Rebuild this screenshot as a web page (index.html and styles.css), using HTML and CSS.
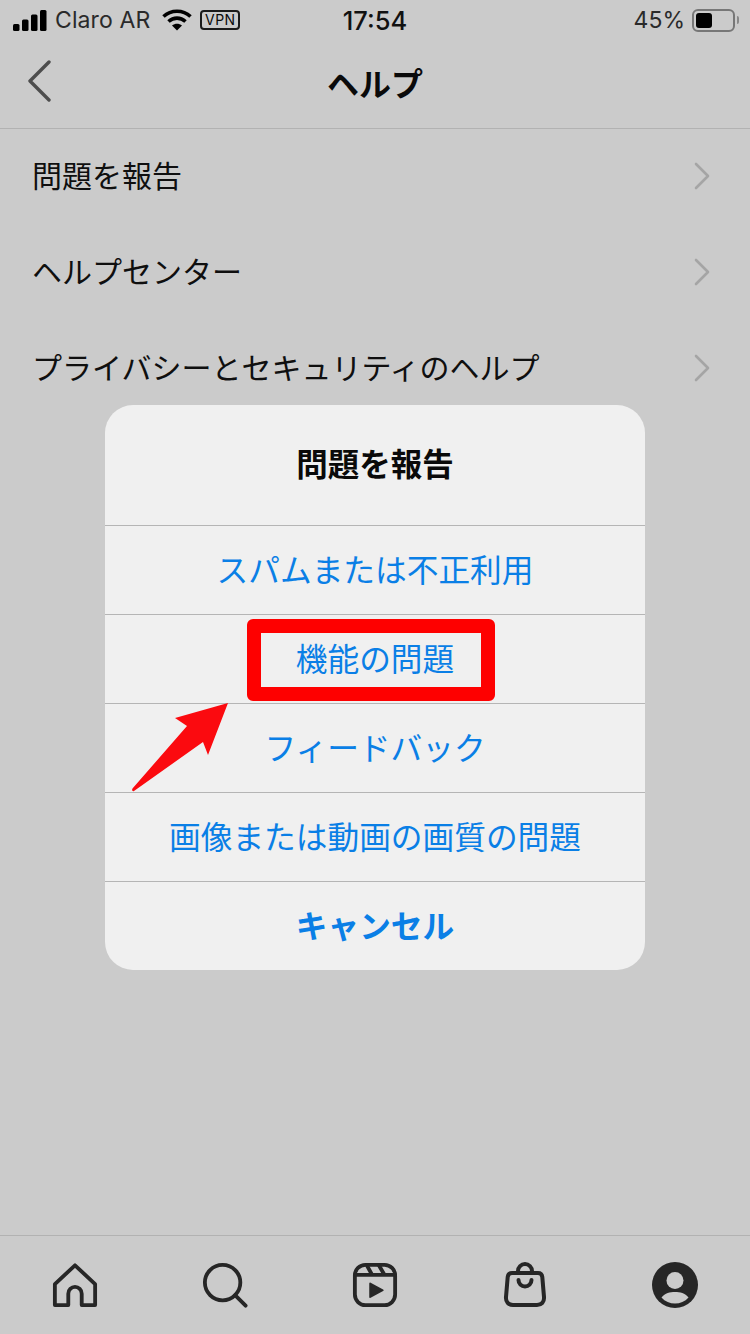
FILE: index.html
```html
<!DOCTYPE html>
<html lang="ja">
<head>
    <meta charset="UTF-8">
    <meta name="viewport" content="width=device-width, initial-scale=1.0">
    <title>ヘルプ</title>
    <link rel="stylesheet" href="styles.css">
</head>
<body>
    <div class="screen">

        <!-- Status bar -->
        <div class="status-bar">
            <div class="status-left">
                <svg class="signal" width="34" height="21" viewBox="0 0 34 21">
                    <rect x="0" y="14" width="6.500" height="7" rx="1.500"/>
                    <rect x="9" y="9.500" width="6.500" height="11.500" rx="1.500"/>
                    <rect x="18" y="4.500" width="6.500" height="16.500" rx="1.500"/>
                    <rect x="27" y="0" width="6.500" height="21" rx="1.500"/>
                </svg>
                <span class="carrier">Claro AR</span>
                <svg class="wifi" width="30" height="22" viewBox="0 0 30 22">
                    <path d="M1.500 7.500C9 .5 21 .5 28.500 7.500" fill="none" stroke="#000" stroke-width="3.600"/>
                    <path d="M6.500 12.500C11.500 8 18.500 8 23.500 12.500" fill="none" stroke="#000" stroke-width="3.600"/>
                    <path d="M10 16.500C13 14 17 14 20 16.500L15 21.500Z"/>
                </svg>
                <span class="vpn">VPN</span>
            </div>
            <div class="status-time">17:54</div>
            <div class="status-right">
                <span class="percent">45%</span>
                <span class="battery"><span class="battery-level"></span></span>
                <span class="battery-cap"></span>
            </div>
        </div>

        <!-- Nav -->
        <header class="nav">
            <svg class="back" width="24" height="42" viewBox="0 0 24 42">
                <path d="M22 2L3 21L22 40" fill="none" stroke="#4d4d4d" stroke-width="3.400" stroke-linecap="round" stroke-linejoin="round"/>
            </svg>
            <h1>ヘルプ</h1>
        </header>

        <!-- Help list -->
        <ul class="help-list">
            <li><span>問題を報告</span><svg class="chevron" width="16" height="28" viewBox="0 0 16 28"><path d="M2 2L14 14L2 26"/></svg></li>
            <li><span>ヘルプセンター</span><svg class="chevron" width="16" height="28" viewBox="0 0 16 28"><path d="M2 2L14 14L2 26"/></svg></li>
            <li><span>プライバシーとセキュリティのヘルプ</span><svg class="chevron" width="16" height="28" viewBox="0 0 16 28"><path d="M2 2L14 14L2 26"/></svg></li>
        </ul>

        <!-- Tab bar -->
        <nav class="tab-bar">
            <svg width="46" height="46" viewBox="-1 -1 48 48" class="tab-icon">
                <path d="M23 2.500L44 22V44H30V32A7 7 0 0 0 16 32V44H2V22Z"/>
            </svg>
            <svg width="46" height="46" viewBox="-1 -1 48 48" class="tab-icon">
                <circle cx="20.500" cy="20.500" r="18.500"/>
                <path d="M33.500 33.500L44.500 44.500" stroke-linecap="round"/>
            </svg>
            <svg width="46" height="46" viewBox="-1 -1 48 48" class="tab-icon">
                <rect x="2" y="2" width="42" height="42" rx="11"/>
                <path d="M2 12.500H44M14.500 2.500L20 12.500M27 2.500L33 12.500"/>
                <path class="solid" d="M18 21.500L31 28.500L18 35.500Z"/>
            </svg>
            <svg width="46" height="46" viewBox="0 0 46 46" class="tab-icon">
                <path d="M10 11H36C38.500 11 40 12.500 40.300 15L42 35C42.400 40 39.500 43 35 43H11C6.500 43 3.600 40 4 35L5.700 15C6 12.500 7.500 11 10 11Z"/>
                <path d="M16 11V9A7 7 0 0 1 30 9V11"/>
                <path d="M16.500 18A6.500 6.500 0 0 0 29.500 18" stroke-linecap="round"/>
            </svg>
            <svg width="46" height="46" viewBox="0 0 46 46" class="profile">
                <circle cx="23" cy="23" r="23" fill="#262626"/>
                <circle cx="23" cy="18.500" r="8.500" fill="#cbcbcb"/>
                <path d="M9.500 35.500C13 31 18 30 23 30C28 30 33 31 36.500 35.500C33 39.500 28 41.500 23 41.500C18 41.500 13 39.500 9.500 35.500Z" fill="#cbcbcb"/>
            </svg>
        </nav>

        <!-- Alert -->
        <div class="alert">
            <div class="alert-title">問題を報告</div>
            <div class="alert-btn">スパムまたは不正利用</div>
            <div class="alert-btn">機能の問題</div>
            <div class="alert-btn">フィードバック</div>
            <div class="alert-btn">画像または動画の画質の問題</div>
            <div class="alert-btn cancel">キャンセル</div>
        </div>

        <!-- Annotation -->
        <div class="highlight"></div>
        <svg class="arrow" width="100" height="92" viewBox="0 0 100 92">
            <path d="M97 2L77 54L72 41L3 90C1.500 91 .5 89 1.500 87.500L56 25L44 17Z" fill="#fb0a0f"/>
        </svg>
    </div>
</body>
</html>
```

FILE: styles.css
```css
* {
    margin: 0;
    padding: 0;
    box-sizing: border-box;
}

body {
    font-family: 'Noto Sans CJK JP', 'Liberation Sans', sans-serif;
    background-color: #cbcbcb;
    color: #0c0c0c;
}

.screen {
    position: relative;
    width: 750px;
    height: 1334px;
    display: flex;
    flex-direction: column;
    overflow: hidden;
}

/* Status bar */
.status-bar {
    height: 40px;
    padding: 0 11px 0 13px;
    display: grid;
    grid-template-columns: 1fr auto 1fr;
    align-items: center;
    font-family: 'Inter', 'Liberation Sans', sans-serif;
    font-size: 23px;
}

.status-left {
    display: flex;
    align-items: center;
}

.signal {
    margin-right: 8px;
}

.carrier {
    color: #2a2a2a;
    letter-spacing: 0.1px;
}

.wifi {
    margin-left: 12px;
}

.vpn {
    margin-left: 8px;
    width: 40px;
    height: 20px;
    border: 2px solid #1a1a1a;
    border-radius: 4px;
    font-size: 14px;
    line-height: 16px;
    text-align: center;
    letter-spacing: 0.5px;
}

.status-time {
    font-size: 25.500px;
    font-weight: 500;
    color: #111;
    margin-left: -2px;
}

.status-right {
    display: flex;
    align-items: center;
    justify-content: flex-end;
}

.percent {
    color: #2a2a2a;
    margin-right: 7px;
    font-size: 23px;
}

.battery {
    width: 43px;
    height: 23px;
    border: 2px solid #777;
    border-radius: 6px;
    padding: 2px;
}

.battery-level {
    display: block;
    width: 16px;
    height: 15px;
    border-radius: 3px;
    background-color: #000;
}

.battery-cap {
    width: 2px;
    height: 8px;
    margin-left: 2px;
    background-color: #888;
    border-radius: 0 2px 2px 0;
}

/* Nav */
.nav {
    height: 89px;
    padding-bottom: 5px;
    border-bottom: 1px solid #b2b2b2;
    display: flex;
    align-items: center;
    justify-content: center;
    position: relative;
}

.nav h1 {
    font-size: 32px;
    font-weight: 700;
    color: #0a0a0a;
}

.back {
    position: absolute;
    left: 27px;
    top: 20px;
}

/* Help list */
.help-list {
    list-style: none;
}

.help-list li {
    height: 96px;
    padding: 0 40px 2px 32px;
    display: flex;
    align-items: center;
    justify-content: space-between;
    font-size: 30px;
    color: #0f0f0f;
}

.help-list li span {
    margin-top: -5px;
}

.chevron path {
    fill: none;
    stroke: #a5a5a5;
    stroke-width: 2.600;
    stroke-linecap: round;
    stroke-linejoin: round;
}

/* Tab bar */
.tab-bar {
    margin-top: auto;
    height: 99px;
    border-top: 1px solid #b2b2b2;
    padding: 0 52px;
    display: flex;
    align-items: center;
    justify-content: space-between;
}

.tab-icon * {
    fill: none;
    stroke: #262626;
    stroke-width: 4;
    stroke-linejoin: round;
}

.tab-icon .solid {
    fill: #262626;
    stroke-width: 2;
}

/* Alert */
.alert {
    position: absolute;
    left: 105px;
    top: 405px;
    width: 540px;
    border-radius: 28px;
    background-color: #f0f0f0;
    text-align: center;
    font-size: 31.700px;
    overflow: hidden;
}

.alert-title {
    height: 120px;
    line-height: 115px;
    font-weight: 700;
    font-size: 31.500px;
    color: #0a0a0a;
}

.alert-btn {
    height: 89px;
    line-height: 84px;
    border-top: 1px solid #b5b5b5;
    color: #0a7fe6;
}

.alert-btn.cancel {
    font-weight: 700;
}

/* Annotation */
.highlight {
    position: absolute;
    left: 247px;
    top: 619px;
    width: 248px;
    height: 82px;
    border: 14px solid #fe0000;
    border-radius: 6px;
}

.arrow {
    position: absolute;
    left: 131px;
    top: 701px;
}
```
